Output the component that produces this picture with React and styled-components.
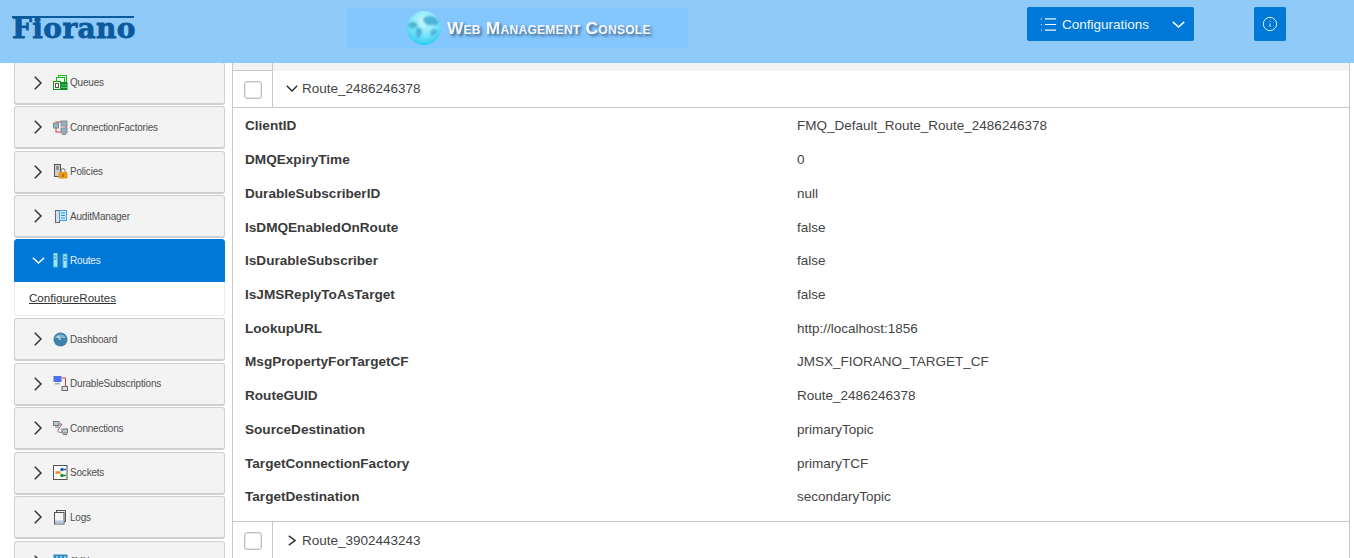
import React from "react";
import styled, { createGlobalStyle } from "styled-components";
import { List, Info } from "lucide-react";

const GlobalStyle = createGlobalStyle`
  html, body {
    margin: 0;
    padding: 0;
    height: 100%;
    overflow: hidden;
    background: #fff;
    font-family: "Liberation Sans", Arial, sans-serif;
  }
`;

const Page = styled.div`
  width: 1354px;
  height: 558px;
  overflow: hidden;
  display: flex;
  flex-direction: column;
`;

const Header = styled.header`
  flex: 0 0 63px;
  background: #90caf9;
  display: flex;
  align-items: flex-start;
  position: relative;
  z-index: 2;
`;

const LogoBox = styled.div`
  width: 347px;
  padding: 16px 0 0 12px;
  box-sizing: border-box;
`;

const Logo = styled.div`
  width: 122px;
  height: 23px;
  border-top: 2px solid #0b5a9e;
  box-sizing: border-box;
  font-family: "DejaVu Serif", serif;
  font-weight: 700;
  font-size: 28px;
  line-height: 21px;
  letter-spacing: 0.4px;
  -webkit-text-stroke: 0.8px #0b5a9e;
  color: #0b5a9e;
  white-space: nowrap;
`;

const Banner = styled.div`
  width: 341px;
  height: 40px;
  margin-top: 8px;
  background: #84c6fe;
  display: flex;
  align-items: center;
  padding-left: 58px;
  box-sizing: border-box;
  gap: 4px;
`;

const BannerTitle = styled.span`
  font-weight: 700;
  font-size: 17.2px;
  font-variant: small-caps;
  letter-spacing: 0.3px;
  color: #f4f8fb;
  text-shadow: 2px 2px 3px #3b5f85;
  white-space: nowrap;
`;

const ConfigButton = styled.button`
  margin: 7px 0 0 339px;
  width: 167px;
  height: 34px;
  border: none;
  border-radius: 2px;
  background: #0078d7;
  color: #f0f7fd;
  font: 400 13.5px "Liberation Sans", Arial, sans-serif;
  display: flex;
  align-items: center;
  padding: 0 9px 0 12px;
  box-sizing: border-box;
`;

const ConfigLabel = styled.span`
  margin-left: 4px;
  flex: 1;
  text-align: left;
`;

const InfoButton = styled.button`
  margin: 7px 0 0 60px;
  width: 32px;
  height: 34px;
  border: none;
  border-radius: 2px;
  background: #0078d7;
  color: #f0f7fd;
  display: flex;
  align-items: center;
  justify-content: center;
  padding: 0;
`;

const Body = styled.div`
  flex: 1;
  display: flex;
  min-height: 0;
  overflow: hidden;
`;

const Sidebar = styled.aside`
  flex: 0 0 232px;
  box-sizing: border-box;
  padding-left: 14px;
  overflow: hidden;
`;

const SideList = styled.div`
  width: 211px;
  margin-top: -1.5px;
  display: flex;
  flex-direction: column;
`;

const SideItem = styled.div`
  flex: 0 0 auto;
  height: 43px;
  box-sizing: border-box;
  display: flex;
  align-items: center;
  padding-left: 15px;
  border: 1px solid ${(p) => (p.$open ? "#0078d7" : "#cfcfcf")};
  border-bottom-width: ${(p) => (p.$open ? "1px" : "2px")};
  background: ${(p) => (p.$open ? "#0078d7" : "#f3f3f3")};
  color: ${(p) => (p.$open ? "#e8f3fb" : "#505050")};
  margin-top: ${(p) => (p.$open ? "-1px" : "0")};
  margin-bottom: ${(p) => (p.$open ? "0" : "1.5px")};
  border-radius: ${(p) => (p.$open ? "3px 3px 0 0" : "3px")};
`;

const ChevronSlot = styled.span`
  flex: 0 0 16px;
  height: 16px;
  display: flex;
  align-items: center;
  justify-content: center;
  color: ${(p) => p.$color};
`;

const SideIcon = styled.span`
  width: 15px;
  height: 15px;
  margin: 0 2px 0 7px;
  display: flex;
  align-items: center;
  justify-content: center;
`;

const SideLabel = styled.span`
  font-size: 10px;
  letter-spacing: -0.2px;
  white-space: nowrap;
`;

const SubPanel = styled.div`
  height: 34.5px;
  margin-bottom: 2px;
  box-sizing: border-box;
  padding: 6.5px 0 0 14px;
  border: 1px solid #ececec;
  border-top: none;
  border-radius: 0 0 3px 3px;
`;

const SubLink = styled.a`
  font-size: 11.6px;
  color: #333;
  text-decoration: underline;
`;

const Main = styled.main`
  flex: 0 0 1118px;
  box-sizing: border-box;
  border-left: 1px solid #c8c8c8;
  border-right: 1px solid #c8c8c8;
  display: flex;
  flex-direction: column;
`;

const TopStub = styled.div`
  flex: 0 0 8px;
  background: #f3f3f3;
  display: flex;
`;

const StubCell = styled.div`
  width: 40px;
  box-sizing: border-box;
  border-right: 1px solid #c8c8c8;
  border-bottom: 1px solid #c8c8c8;
`;

const RouteRow = styled.div`
  flex: 0 0 37px;
  box-sizing: border-box;
  display: flex;
  border-bottom: 1px solid #c8c8c8;
`;

const CheckCell = styled.div`
  width: 40px;
  box-sizing: border-box;
  border-right: 1px solid #c8c8c8;
  display: flex;
  align-items: center;
  padding: 1px 0 0 11px;
`;

const CheckBox = styled.span`
  width: 18px;
  height: 18px;
  box-sizing: border-box;
  border: 1px solid #bdbdbd;
  box-shadow: inset 0 0 0 1px #e9e9e9;
  border-radius: 3px;
  background: #fff;
`;

const RouteName = styled.div`
  display: flex;
  align-items: center;
  padding: 0 0 ${(p) => (p.$open ? "1px" : "0")} 11px;
  gap: 2px;
  font-size: 13.5px;
  color: #444;
`;

const Details = styled.div`
  flex: 0 0 414px;
  box-sizing: border-box;
  padding-top: 1px;
  border-bottom: 1px solid #c8c8c8;
`;

const Detail = styled.div`
  height: 33.73px;
  display: flex;
  align-items: center;
  padding-left: 12px;
`;

const DetailKey = styled.div`
  width: 552px;
  font-weight: 700;
  font-size: 13.6px;
  color: #3a3a3a;
`;

const DetailValue = styled.div`
  font-size: 13.5px;
  color: #444;
`;

const Chevron = ({ open, width, height, stroke = 1.5 }) => (
  <svg width={width} height={height} viewBox={`0 0 ${width} ${height}`}>
    <polyline
      points={
        open
          ? `0.8,0.8 ${width / 2},${height - 1} ${width - 0.8},0.8`
          : `0.8,0.8 ${width - 1},${height / 2} 0.8,${height - 0.8}`
      }
      fill="none"
      stroke="currentColor"
      strokeWidth={stroke}
    />
  </svg>
);

const Globe = () => (
  <svg width="38" height="38" viewBox="0 0 38 38">
    <defs>
      <radialGradient id="globeFill" cx="50%" cy="30%" r="75%">
        <stop offset="0%" stopColor="#d0f8ff" />
        <stop offset="55%" stopColor="#7be4f8" />
        <stop offset="100%" stopColor="#1fc8f0" />
      </radialGradient>
      <filter id="globeSoft">
        <feGaussianBlur stdDeviation="0.8" />
      </filter>
    </defs>
    <circle cx="19" cy="19" r="17" fill="url(#globeFill)" />
    <g fill="#4db3d8" filter="url(#globeSoft)">
      <path d="M3 15c3-2 6-3 8-1s2 4 0 4-3 3-5 1-3-2-3-4z" />
      <path d="M11 19c3-1 6 0 6 3s-2 6-4 8c-2-3-3-7-2-11z" />
      <path d="M20 8c5-2 9-1 12 2 2 3 2 5 0 6s-5-1-7 0-4-1-6-3 0-4 1-5z" />
      <path d="M27 21c2-1 5-1 5 1s-3 5-5 5-2-5 0-6z" />
    </g>
  </svg>
);

const QueuesIcon = () => (
  <svg width="15" height="15" viewBox="0 0 15 15">
    <rect x="5.5" y="0.5" width="8" height="8" fill="#d9f5d9" stroke="#22b322" />
    <rect x="3.5" y="2.5" width="8" height="8" fill="#e8fbe8" stroke="#22b322" />
    <rect x="0.5" y="6.5" width="7" height="8" fill="#fff" stroke="#0c9c0c" />
    <rect x="2.5" y="8.5" width="3" height="4" fill="none" stroke="#555" />
    <rect x="8" y="7" width="6.5" height="8" fill="#0f8a2a" />
    <path d="M8 10h6.5M8 12.5h6.5" stroke="#58c878" />
  </svg>
);

const FactoriesIcon = () => (
  <svg width="15" height="15" viewBox="0 0 15 15">
    <rect x="3" y="2" width="10" height="10" fill="none" stroke="#e53535" />
    <rect x="0.5" y="3" width="5" height="5" fill="#8fb3c7" stroke="#8a8a8a" />
    <rect x="8" y="1" width="6" height="5" fill="#8fb3c7" stroke="#8a8a8a" />
    <rect x="8" y="8" width="6" height="5" fill="#8fb3c7" stroke="#8a8a8a" />
    <path d="M11 13v2M9 14.5h4" stroke="#8a8a8a" />
  </svg>
);

const PoliciesIcon = () => (
  <svg width="15" height="15" viewBox="0 0 15 15">
    <rect x="1.5" y="0.5" width="6" height="12" fill="#cfcfcf" stroke="#555" />
    <path d="M3 3h3M3 5h3" stroke="#555" />
    <path d="M8 8V6.5a2 2 0 0 1 4 0V8" fill="none" stroke="#777" />
    <rect x="5.5" y="8" width="9" height="6.5" rx="1" fill="#e69a1a" />
    <rect x="9.5" y="10" width="1" height="3" fill="#7a4a00" />
  </svg>
);

const AuditIcon = () => (
  <svg width="15" height="15" viewBox="0 0 15 15">
    <rect x="2.5" y="1.5" width="4" height="12" fill="#ddd" stroke="#667" />
    <rect x="6.5" y="1.5" width="7" height="10" fill="#cfeafc" stroke="#3aa0e0" />
    <path d="M8 4h4M8 6.5h4M8 9h4" stroke="#2d8fd0" />
  </svg>
);

const RoutesIcon = () => (
  <svg width="15" height="15" viewBox="0 0 15 15">
    <rect x="0.5" y="0" width="4" height="14" fill="#a8e2f5" stroke="#3fb7e3" />
    <rect x="10" y="1" width="4" height="14" fill="#a8e2f5" stroke="#3fb7e3" />
    <path d="M1.5 3h2M1.5 6h2M11 4h2M11 7h2" stroke="#1b6f9c" />
    <path d="M7 2v11" stroke="#4f7f9c" strokeWidth="1.2" />
  </svg>
);

const DashboardIcon = () => (
  <svg width="15" height="15" viewBox="0 0 15 15">
    <circle cx="7.5" cy="7.5" r="7" fill="#3f83ad" />
    <path d="M2 6a6 6 0 0 1 11 0z" fill="#86b6d2" />
    <path d="M7.5 8L4.5 4" stroke="#dfeef6" strokeWidth="1.2" />
  </svg>
);

const DurableIcon = () => (
  <svg width="15" height="15" viewBox="0 0 15 15">
    <rect x="0.5" y="0" width="8" height="6" fill="#4f6fe8" />
    <rect x="2" y="7" width="5" height="1.5" fill="#9aa8d8" />
    <path d="M9 2h3.5v8" fill="none" stroke="#e53535" />
    <rect x="9" y="10.5" width="5.5" height="4" fill="#ddd" stroke="#666" />
  </svg>
);

const ConnectionsIcon = () => (
  <svg width="15" height="15" viewBox="0 0 15 15">
    <rect x="0.5" y="0.5" width="5.5" height="4" fill="#b5cdd8" stroke="#777" />
    <rect x="9" y="8" width="5.5" height="4" fill="#b5cdd8" stroke="#777" />
    <path d="M2 6h4M10 13.5h4" stroke="#777" />
    <path d="M6 3h3l-4 6c-1 2 2 3 4 2" fill="none" stroke="#9a5fa8" />
  </svg>
);

const SocketsIcon = () => (
  <svg width="15" height="15" viewBox="0 0 15 15">
    <rect x="0.5" y="0.5" width="13.5" height="14" fill="#fbfbfb" stroke="#555" />
    <path d="M2.5 7.5h5" stroke="#e88a2a" strokeWidth="2.5" />
    <path d="M8 4.5h5" stroke="#1f5fb0" strokeWidth="1.5" />
    <circle cx="9" cy="4.5" r="1.7" fill="#1f5fb0" />
    <path d="M8 10.5h5" stroke="#1f8a2a" strokeWidth="1.5" />
    <circle cx="9" cy="10.5" r="1.7" fill="#1f8a2a" />
  </svg>
);

const LogsIcon = () => (
  <svg width="15" height="15" viewBox="0 0 15 15">
    <rect x="3.5" y="0.5" width="9" height="11" fill="#eee" stroke="#555" />
    <rect x="1.5" y="2.5" width="9.5" height="11.5" fill="#f5f5f5" stroke="#555" />
    <rect x="2" y="10.5" width="8.5" height="3" fill="#b7c8e4" />
  </svg>
);

const JmxIcon = () => (
  <svg width="15" height="15" viewBox="0 0 15 15">
    <rect x="0.5" y="0.5" width="14" height="14" fill="#2f88c4" />
    <path d="M3 3h2M7 3h2M11 3h2" stroke="#fff" />
  </svg>
);

const routeDetails = [
  ["ClientID", "FMQ_Default_Route_Route_2486246378"],
  ["DMQExpiryTime", "0"],
  ["DurableSubscriberID", "null"],
  ["IsDMQEnabledOnRoute", "false"],
  ["IsDurableSubscriber", "false"],
  ["IsJMSReplyToAsTarget", "false"],
  ["LookupURL", "http://localhost:1856"],
  ["MsgPropertyForTargetCF", "JMSX_FIORANO_TARGET_CF"],
  ["RouteGUID", "Route_2486246378"],
  ["SourceDestination", "primaryTopic"],
  ["TargetConnectionFactory", "primaryTCF"],
  ["TargetDestination", "secondaryTopic"],
];

function NavItem({ icon, label, open }) {
  return (
    <SideItem $open={open}>
      <ChevronSlot $color={open ? "#fff" : "#333"}>
        {open ? <Chevron open width={13} height={7} /> : <Chevron width={8} height={14} />}
      </ChevronSlot>
      <SideIcon>{icon}</SideIcon>
      <SideLabel>{label}</SideLabel>
    </SideItem>
  );
}

export default function App() {
  return (
    <Page>
      <GlobalStyle />
      <Header>
        <LogoBox>
          <Logo>Fiorano</Logo>
        </LogoBox>
        <Banner>
          <Globe />
          <BannerTitle>Web Management Console</BannerTitle>
        </Banner>
        <ConfigButton>
          <List size={19} strokeWidth={1.5} />
          <ConfigLabel>Configurations</ConfigLabel>
          <Chevron open width={13} height={7} stroke={1.6} />
        </ConfigButton>
        <InfoButton>
          <Info size={16} strokeWidth={1.4} />
        </InfoButton>
      </Header>
      <Body>
        <Sidebar>
          <SideList>
            <NavItem icon={<QueuesIcon />} label="Queues" />
            <NavItem icon={<FactoriesIcon />} label="ConnectionFactories" />
            <NavItem icon={<PoliciesIcon />} label="Policies" />
            <NavItem icon={<AuditIcon />} label="AuditManager" />
            <NavItem icon={<RoutesIcon />} label="Routes" open />
            <SubPanel>
              <SubLink>ConfigureRoutes</SubLink>
            </SubPanel>
            <NavItem icon={<DashboardIcon />} label="Dashboard" />
            <NavItem icon={<DurableIcon />} label="DurableSubscriptions" />
            <NavItem icon={<ConnectionsIcon />} label="Connections" />
            <NavItem icon={<SocketsIcon />} label="Sockets" />
            <NavItem icon={<LogsIcon />} label="Logs" />
            <NavItem icon={<JmxIcon />} label="JMX" />
          </SideList>
        </Sidebar>
        <Main>
          <TopStub>
            <StubCell />
          </TopStub>
          <RouteRow>
            <CheckCell>
              <CheckBox />
            </CheckCell>
            <RouteName $open>
              <ChevronSlot $color="#333">
                <Chevron open width={12} height={7} />
              </ChevronSlot>
              Route_2486246378
            </RouteName>
          </RouteRow>
          <Details>
            {routeDetails.map(([key, value]) => (
              <Detail key={key}>
                <DetailKey>{key}</DetailKey>
                <DetailValue>{value}</DetailValue>
              </Detail>
            ))}
          </Details>
          <RouteRow>
            <CheckCell>
              <CheckBox />
            </CheckCell>
            <RouteName>
              <ChevronSlot $color="#333">
                <Chevron width={8} height={11} />
              </ChevronSlot>
              Route_3902443243
            </RouteName>
          </RouteRow>
        </Main>
      </Body>
    </Page>
  );
}
